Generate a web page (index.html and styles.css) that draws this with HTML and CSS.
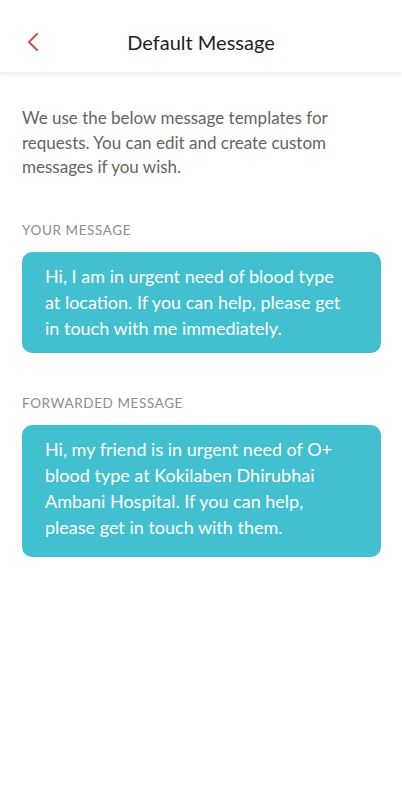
FILE: index.html
```html
<!DOCTYPE html>
<html lang="en">
<head>
    <meta charset="UTF-8">
    <meta name="viewport" content="width=device-width, initial-scale=1.0">
    <title>Default Message</title>
    <link rel="stylesheet" href="styles.css">
</head>
<body>
    <div class="header">
        <div class="back">
            <svg width="14" height="20" viewBox="0 0 14 20">
                <path d="M11 2 L3 10 L11 18" fill="none" stroke="#c85a54" stroke-width="2.2" stroke-linecap="round" stroke-linejoin="round"/>
            </svg>
        </div>
        <h1>Default Message</h1>
    </div>

    <div class="content">
        <p class="intro">We use the below message templates for requests. You can edit and create custom messages if you wish.</p>

        <p class="label">YOUR MESSAGE</p>
        <div class="bubble">
            <p>Hi, I am in urgent need of blood type at location. If you can help, please get in touch with me immediately.</p>
        </div>

        <p class="label">FORWARDED MESSAGE</p>
        <div class="bubble forwarded">
            <p>Hi, my friend is in urgent need of O+ blood type at Kokilaben Dhirubhai Ambani Hospital. If you can help, please get in touch with them.</p>
        </div>
    </div>
</body>
</html>
```

FILE: styles.css
```css
*{
    margin: 0px;
    padding: 0px;
    box-sizing: border-box;
}

body{
    font-family: Lato, "Open Sans", sans-serif;
    background-color: white;
    width: 402px;
}

.header{
    height: 72px;
    display: flex;
    align-items: center;
    justify-content: center;
    position: relative;
    box-shadow: 0 2px 5px rgba(0, 0, 0, 0.08);
    padding-top: 12px;
}

.header h1{
    font-size: 20px;
    font-weight: 400;
    color: #1e1e1e;
}

.back{
    position: absolute;
    left: 26px;
    top: 32px;
    display: flex;
}

.content{
    padding: 34px 21px 0 22px;
}

.intro{
    font-size: 17px;
    line-height: 24.5px;
    color: #646464;
    padding-right: 4px;
}

.label{
    margin-top: 42px;
    font-size: 13.5px;
    line-height: 16px;
    letter-spacing: 0.6px;
    color: #8c8c8c;
}

.bubble{
    margin-top: 14px;
    background-color: #43c0cf;
    border-radius: 10px;
    padding: 11px 36px 12px 23px;
    margin-bottom: 2px;
}

.bubble.forwarded{
    padding-bottom: 17px;
}

.bubble p{
    font-size: 18px;
    line-height: 26px;
    color: white;
}
```
